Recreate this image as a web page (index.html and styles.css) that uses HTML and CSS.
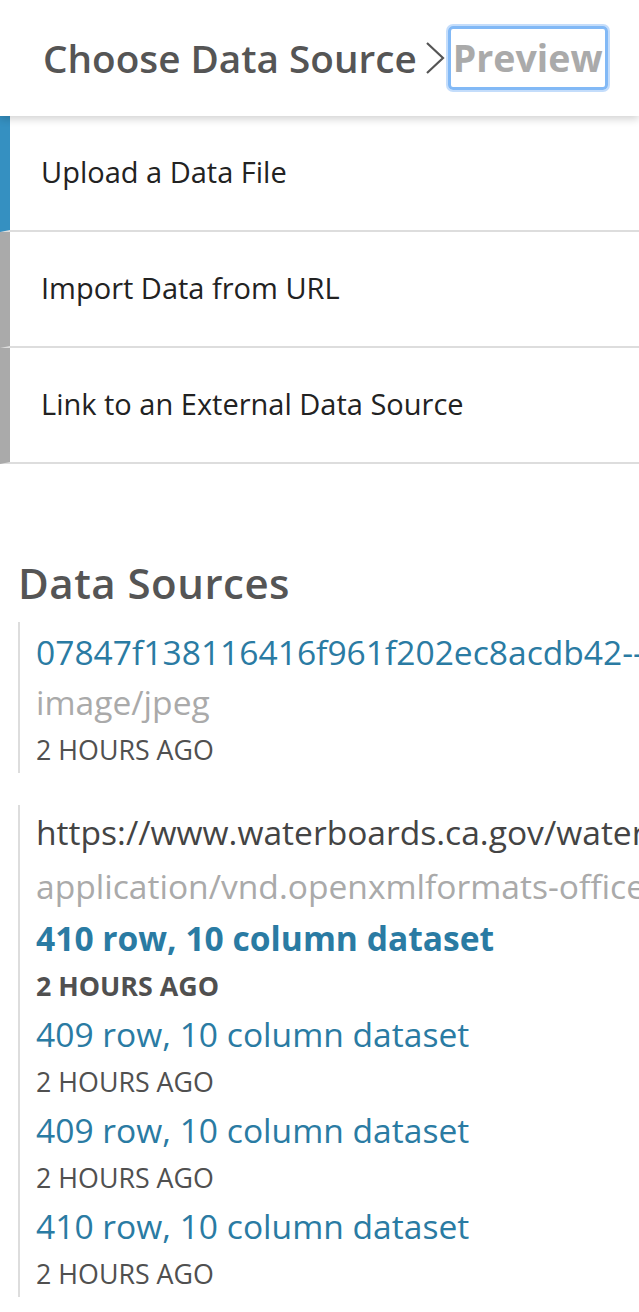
FILE: index.html
```html
<!DOCTYPE html>
<html>
<head>
<meta charset="utf-8">
<link rel="stylesheet" href="styles.css">
</head>
<body>
<div class="page">
  <header class="header">
    <span class="crumb">Choose Data Source</span>
    <svg class="chev" width="22" height="34" viewBox="0 0 22 34"><polyline points="3,2 19,17 3,32" fill="none" stroke="#555" stroke-width="2.2"/></svg>
    <span class="crumb-next">Preview</span>
  </header>
  <nav class="options">
    <div class="option active">Upload a Data File</div>
    <div class="option">Import Data from URL</div>
    <div class="option">Link to an External Data Source</div>
  </nav>
  <section class="sources">
    <h2 class="sources-title">Data Sources</h2>
    <div class="source first">
      <div class="link">07847f138116416f961f202ec8acdb42--image.jpeg</div>
      <div class="type">image/jpeg</div>
      <div class="time">2 Hours Ago</div>
    </div>
    <div class="source">
      <div class="url tall">https://www.waterboards.ca.gov/water_issues/programs/</div>
      <div class="type tall">application/vnd.openxmlformats-officedocument.spreadsheetml.sheet</div>
      <div class="link bold">410 row, 10 column dataset</div>
      <div class="time bold">2 Hours Ago</div>
      <div class="link">409 row, 10 column dataset</div>
      <div class="time">2 Hours Ago</div>
      <div class="link">409 row, 10 column dataset</div>
      <div class="time">2 Hours Ago</div>
      <div class="link">410 row, 10 column dataset</div>
      <div class="time">2 Hours Ago</div>
    </div>
  </section>
</div>
</body>
</html>
```
FILE: styles.css
```css
html, body {
  margin: 0;
  padding: 0;
  background: #fff;
}
body {
  font-family: "Open Sans", "Noto Sans", sans-serif;
  overflow: hidden;
  width: 639px;
}
.page {
  width: 639px;
  overflow: hidden;
}
.header {
  height: 116px;
  display: flex;
  align-items: center;
  padding-left: 43px;
  box-shadow: 0 3px 8px rgba(0, 0, 0, 0.18);
  position: relative;
  z-index: 1;
  white-space: nowrap;
}
.crumb {
  font-size: 38.7px;
  font-weight: 600;
  color: #555;
}
.chev {
  margin: 0 2px 0 7px;
  flex: none;
}
.crumb-next {
  font-size: 37.5px;
  font-weight: 700;
  color: #aaa;
  padding: 0 2px;
  line-height: 58px;
  border: 3px solid #82b9f6;
  border-radius: 5px;
  box-shadow: 0 0 0 2px #c4ddfb;
}
.options {
  display: flex;
  flex-direction: column;
}
.option {
  height: 114px;
  display: flex;
  align-items: center;
  padding-left: 31px;
  padding-bottom: 3px;
  box-sizing: border-box;
  height: 116px;
  border-left: 10px solid #aaa;
  border-bottom: 2px solid #ddd;
  font-size: 29px;
  color: #222;
  white-space: nowrap;
}
.option.active {
  border-left-color: #3590c1;
}
.sources {
  padding: 93px 0 0 18px;
}
.sources-title {
  margin: 0 0 13px 0;
  font-size: 42px;
  font-weight: 600;
  color: #555;
  line-height: 52px;
  letter-spacing: 0.5px;
}
.source {
  border-left: 2px solid #ddd;
  padding-left: 16px;
  margin-bottom: 32px;
  white-space: nowrap;
}
.source.first {
  padding-top: 5px;
}
.link, .url, .type {
  font-size: 33.6px;
  line-height: 50px;
}
.tall {
  line-height: 54px;
}
.link {
  color: #2a7ba3;
}
.url {
  color: #444;
}
.type {
  color: #aaa;
}
.time {
  font-size: 26.8px;
  line-height: 46px;
  color: #505050;
  text-transform: uppercase;
}
.bold {
  font-weight: 700;
}
```
